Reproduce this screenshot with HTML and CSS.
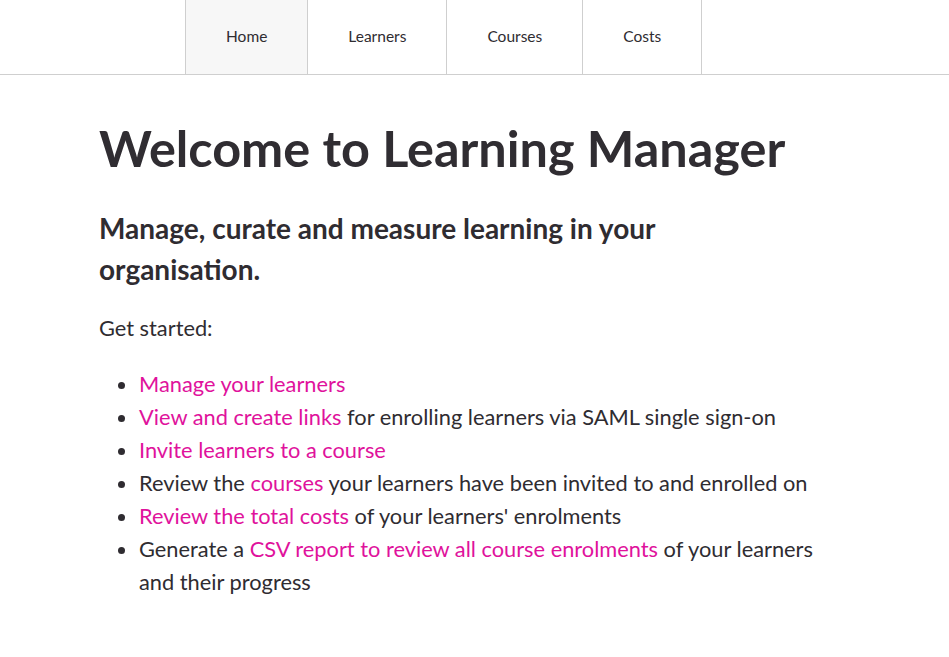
FILE: index.html
```html
<!DOCTYPE html>
<html lang="en">
<head>
<meta charset="utf-8">
<title>Learning Manager</title>
<link rel="stylesheet" href="styles.css">
</head>
<body>
<nav class="topnav">
  <ul class="topnav-list">
    <li class="topnav-item is-active"><a href="#">Home</a></li>
    <li class="topnav-item"><a href="#">Learners</a></li>
    <li class="topnav-item"><a href="#">Courses</a></li>
    <li class="topnav-item"><a href="#">Costs</a></li>
  </ul>
</nav>
<main class="content">
  <h1 class="title">Welcome to Learning Manager</h1>
  <h2 class="lead">Manage, curate and measure learning in your organisation.</h2>
  <p class="intro">Get started:</p>
  <ul class="tasks">
    <li><a href="#">Manage your learners</a></li>
    <li><a href="#">View and create links</a> for enrolling learners via SAML single sign-on</li>
    <li><a href="#">Invite learners to a course</a></li>
    <li>Review the <a href="#">courses</a> your learners have been invited to and enrolled on</li>
    <li><a href="#">Review the total costs</a> of your learners' enrolments</li>
    <li>Generate a <a href="#">CSV report to review all course enrolments</a> of your learners and their progress</li>
  </ul>
</main>
</body>
</html>
```
FILE: styles.css
```css
* { box-sizing: border-box; }
body {
  margin: 0;
  font-family: Lato, "Open Sans", sans-serif;
  color: #2f2c31;
  background: #fff;
}
a { color: #e0129c; text-decoration: none; }

.topnav { border-bottom: 1px solid #cfcfcf; }
.topnav-list {
  display: flex;
  margin: 0;
  padding: 0 0 0 185px;
  list-style: none;
  height: 74px;
}
.topnav-item {
  display: flex;
  border-right: 1px solid #cfcfcf;
}
.topnav-item:first-child { border-left: 1px solid #cfcfcf; }
.topnav-item.is-active { background: #f7f7f7; }
.topnav-item a {
  display: flex;
  align-items: center;
  padding: 0 40px 3px;
  color: #2f2c31;
  font-size: 15.5px;
}

.content {
  padding-left: 99px;
  max-width: 849px;
}
.title {
  margin: 43px 0 0;
  font-size: 50.4px;
  line-height: 60px;
  font-weight: 700;
  color: #302d32;
  white-space: nowrap;
}
.lead {
  margin: 30px 0 0;
  max-width: 600px;
  font-size: 28px;
  line-height: 41px;
  font-weight: 700;
}
.intro {
  margin: 21px 0 0;
  font-size: 21.8px;
  line-height: 33px;
}
.tasks {
  margin: 23px 0 0;
  padding-left: 40px;
  font-size: 21.8px;
  line-height: 33px;
}
```
